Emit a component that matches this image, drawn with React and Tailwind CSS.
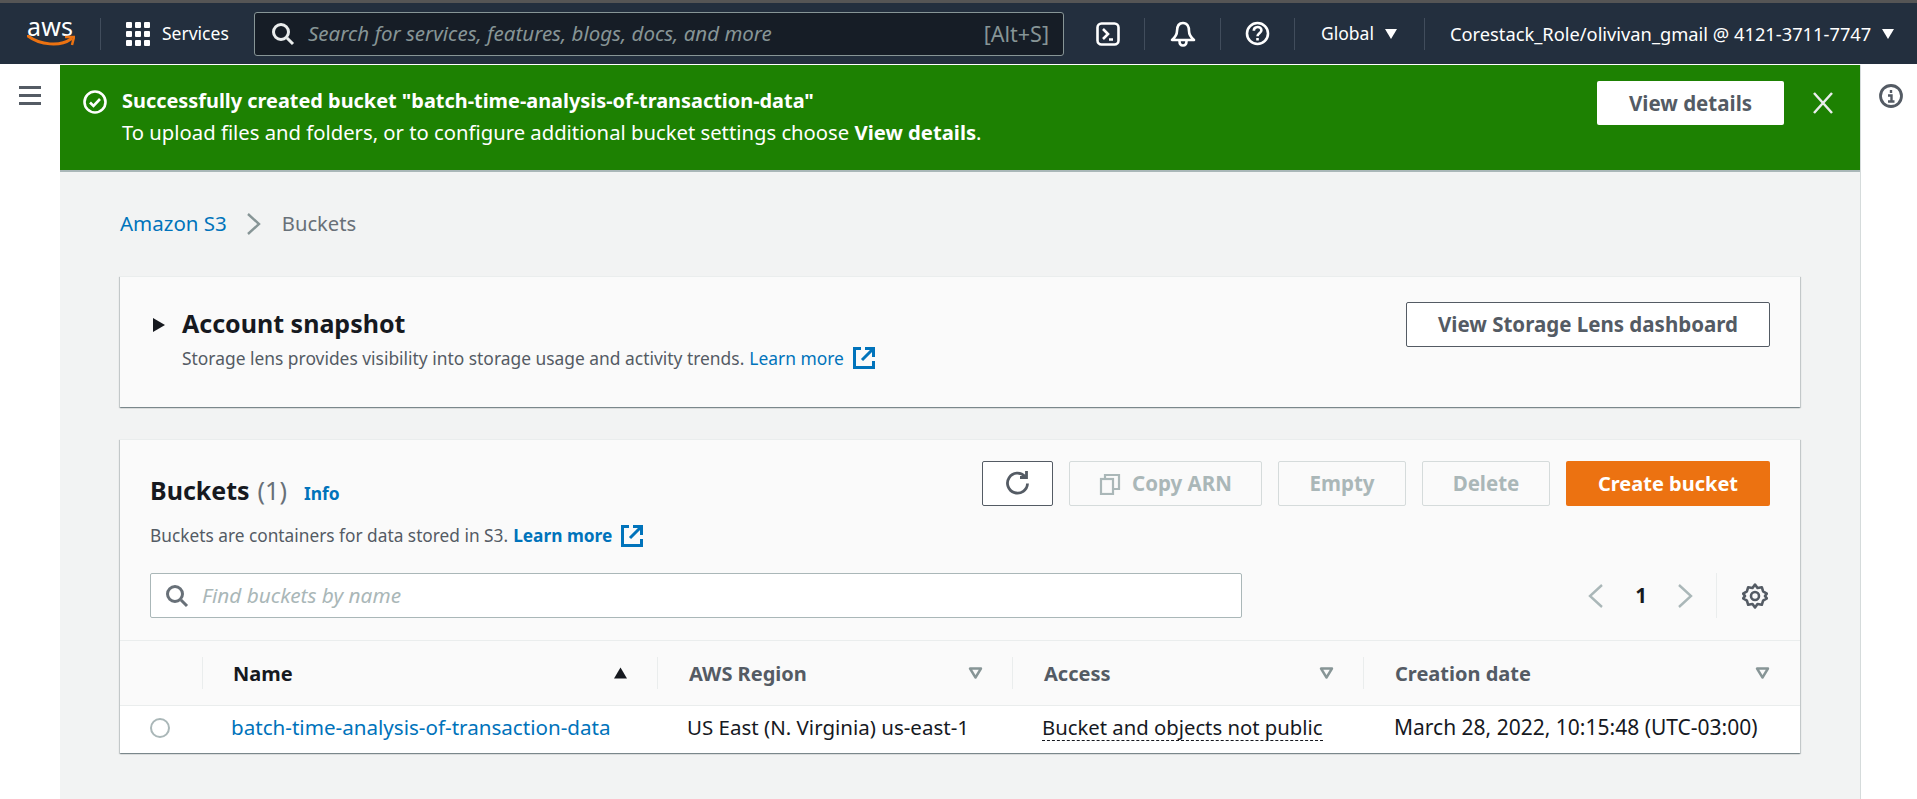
import React from "react";

const Caret = ({ filled }) => (
  <svg width="15" height="14" viewBox="0 0 15 14" className="shrink-0">
    {filled ? (
      <path d="M7.500 1.500 14 12.500H1Z" fill="#16191f" />
    ) : (
      <path d="M2 2.500h11L7.500 11.500Z" fill="none" stroke="#879596" strokeWidth="2.400" strokeLinejoin="round" />
    )}
  </svg>
);

const DownTri = () => (
  <svg width="12" height="10" viewBox="0 0 12 10" className="shrink-0"><path d="M0 0h12L6 10Z" fill="#fff" /></svg>
);

const External = () => (
  <svg width="24" height="24" viewBox="0 0 24 24" fill="none" stroke="#0073bb" strokeWidth="3" className="shrink-0">
    <path d="M9 2.500H2.500v19h19V15" />
    <path d="M13 2.500h8.500V11M21 3 10 14" />
  </svg>
);

const Sep = () => <div className="w-px h-[32px] bg-[#414d5c] shrink-0" />;

const HeadCell = ({ children, dark, filled, pl = "pl-[31px]" }) => (
  <div className={`flex items-center justify-between h-[32px] ${pl} pr-[29px] border-l border-[#eaeded]`}>
    <span className={`font-bold text-[20px] ${dark ? "text-[#16191f]" : "text-[#545b64]"}`}>{children}</span>
    <Caret filled={filled} />
  </div>
);

const DisabledBtn = ({ className = "", children }) => (
  <div className={`h-[45px] flex items-center justify-center gap-[11px] rounded-[2px] border border-[#d5dbdb] bg-[#fafafa] text-[#aab7b8] font-bold text-[20.500px] ${className}`}>
    {children}
  </div>
);

export default function App() {
  return (
    <div className="w-[1917px] h-[799px] overflow-hidden bg-white flex flex-col font-['Noto_Sans',sans-serif] text-[20.500px] leading-[25px] text-[#16191f]">
      {/* Top nav */}
      <header className="h-[64px] shrink-0 border-t-[3px] border-[#555555] bg-[#232f3e] flex items-center text-white relative">
        <div className="w-[100px] shrink-0 pl-[27px] flex flex-col">
          <span className="text-[25px] leading-[20px] -mt-[4px] tracking-[0.2px]">aws</span>
          <svg width="48" height="12" viewBox="0 0 48 12" className="-mt-[1px]" fill="none">
            <path d="M1 1c12 9 32 11 43 3" stroke="#ec7211" strokeWidth="3" strokeLinecap="round" />
            <path d="M38 2h9l-2 8" stroke="#ec7211" strokeWidth="2.500" fill="none" />
          </svg>
        </div>
        <Sep />
        <svg width="24" height="24" viewBox="0 0 24 24" className="ml-[25px] shrink-0" fill="#fff">
          {[0, 9, 18].map((x) => [0, 9, 18].map((y) => <rect key={`${x}-${y}`} x={x} y={y} width="6" height="6" rx="1" />))}
        </svg>
        <span className="ml-[12px] w-[92px] text-[17.500px] shrink-0">Services</span>
        <div className="w-[810px] h-[44px] shrink-0 rounded-[3px] border border-[#879596] bg-[#161d26] flex items-center pl-[16px] pr-[14px]">
          <svg width="24" height="24" viewBox="0 0 24 24" fill="none" stroke="#eaeded" strokeWidth="3" className="shrink-0">
            <circle cx="10" cy="10" r="7.500" />
            <path d="m16 16 6 6" />
          </svg>
          <span className="italic ml-[13px] text-[#879596] flex-1 whitespace-nowrap">Search for services, features, blogs, docs, and more</span>
          <span className="text-[#879596] text-[21.500px]">[Alt+S]</span>
        </div>
        <svg width="24" height="24" viewBox="0 0 24 24" fill="none" stroke="#fff" strokeWidth="2.600" className="ml-[32px] shrink-0">
          <rect x="1.500" y="1.500" width="21" height="21" rx="4" />
          <path d="m7 7 5 5-5 5M13 17.500h4" />
        </svg>
        <div className="ml-[24px]"><Sep /></div>
        <svg width="26" height="26" viewBox="0 0 26 26" fill="none" stroke="#fff" strokeWidth="2.600" className="ml-[25px] shrink-0">
          <path d="M13 2c-4.500 0-6 4-6 8 0 3-1.500 6-5 9h22c-3.500-3-5-6-5-9 0-4-1.500-8-6-8Z" strokeLinejoin="round" />
          <path d="M9.500 20c0 3 1.500 4.500 3.500 4.500s3.500-1.500 3.500-4.500" />
        </svg>
        <div className="ml-[24px]"><Sep /></div>
        <svg width="25" height="25" viewBox="0 0 25 25" fill="none" stroke="#fff" strokeWidth="2.600" className="ml-[24px] shrink-0">
          <circle cx="12.500" cy="12.500" r="10.500" />
          <path d="M8.800 9.800c0-5 7.600-5 7.600-.5 0 3-3.900 3-3.900 6" />
          <path d="M12.500 17v2.500" />
        </svg>
        <div className="ml-[24px]"><Sep /></div>
        <span className="ml-[26px] shrink-0 text-[17.500px]">Global</span>
        <div className="ml-[11px]"><DownTri /></div>
        <div className="ml-[27px]"><Sep /></div>
        <span className="ml-[25px] shrink-0 text-[18.300px] whitespace-nowrap">Corestack_Role/olivivan_gmail @ 4121-3711-7747</span>
        <div className="ml-[11px]"><DownTri /></div>
      </header>
      <div className="h-px shrink-0 bg-white" />

      <div className="flex flex-1 min-h-0">
        {/* Left rail */}
        <aside className="w-[60px] shrink-0 bg-white pl-[19px] pt-[21px]">
          <svg width="22" height="19" viewBox="0 0 22 19" fill="#545b64"><rect width="22" height="3" /><rect y="8" width="22" height="3" /><rect y="16" width="22" height="3" /></svg>
        </aside>

        {/* Main */}
        <main className="flex-1 min-w-0 flex flex-col bg-[#f2f3f3]">
          <div className="h-[107px] shrink-0 bg-[#1d8102] border-b-2 border-[#aab7b8] flex text-white pl-[23px] pr-[26px]">
            <svg width="24" height="24" viewBox="0 0 24 24" fill="none" stroke="#fff" strokeWidth="2.600" className="mt-[25px] shrink-0">
              <circle cx="12" cy="12" r="10.500" />
              <path d="m7 12.500 3.500 3.500L17 9" />
            </svg>
            <div className="ml-[15px] pt-[21px] flex-1 leading-[30px]">
              <div className="font-bold text-[19.900px]">Successfully created bucket "batch-time-analysis-of-transaction-data"</div>
              <div className="mt-[1px] text-[20.250px]">To upload files and folders, or to configure additional bucket settings choose <b>View details</b>.</div>
            </div>
            <div className="mt-[16px] w-[187px] h-[44px] bg-white rounded-[2px] text-[#545b64] font-bold flex items-center justify-center">View details</div>
            <svg width="22" height="22" viewBox="0 0 22 22" stroke="#eaeded" strokeWidth="2.500" className="mt-[27px] ml-[28px] shrink-0">
              <path d="m2 1 18 20M20 1 2 21" />
            </svg>
          </div>

          <div className="flex items-center pl-[60px] mt-[39px] h-[25px] text-[#687078]">
            <span className="text-[#0073bb]">Amazon S3</span>
            <svg width="16" height="24" viewBox="0 0 16 24" fill="none" stroke="#879596" strokeWidth="2.400" className="ml-[19px]"><path d="m2 2 11 10L2 22" /></svg>
            <span className="ml-[20px] text-[20.200px]">Buckets</span>
          </div>

          <div className="mx-[60px] mt-[40px] flex flex-col gap-[32px]">
            {/* Account snapshot */}
            <section className="h-[131px] shrink-0 bg-[#fafafa] shadow-[0_1px_1px_0_rgba(0,28,36,0.3),1px_1px_1px_0_rgba(0,28,36,0.15),-1px_1px_1px_0_rgba(0,28,36,0.15)] border-t border-[#eaeded] flex">
              <svg width="12" height="14" viewBox="0 0 12 14" className="ml-[33px] mt-[41px] shrink-0"><path d="M0 0 12 7 0 14Z" fill="#16191f" /></svg>
              <div className="ml-[17px] flex-1 pt-[30px]">
                <div className="font-bold text-[25px] leading-[32px]">Account snapshot</div>
                <div className="flex items-center mt-[7px] text-[17.400px] text-[#545b64] leading-[24px]">
                  <span>Storage lens provides visibility into storage usage and activity trends.</span>
                  <span className="ml-[5px] text-[#0073bb]">Learn more</span>
                  <span className="ml-[8px]"><External /></span>
                </div>
              </div>
              <div className="mt-[25px] mr-[30px] w-[364px] h-[45px] rounded-[2px] border border-[#545b64] bg-white text-[#545b64] font-bold flex items-center justify-center">View Storage Lens dashboard</div>
            </section>

            {/* Buckets */}
            <section className="h-[314px] shrink-0 bg-[#fafafa] shadow-[0_1px_1px_0_rgba(0,28,36,0.3),1px_1px_1px_0_rgba(0,28,36,0.15),-1px_1px_1px_0_rgba(0,28,36,0.15)] border-t border-[#eaeded] flex flex-col">
              <div className="flex pl-[30px] pr-[30px] pt-[21px]">
                <div className="flex-1">
                  <div className="flex items-baseline mt-[13px] leading-[32px]">
                    <span className="font-bold text-[25px]">Buckets</span>
                    <span className="text-[25px] text-[#687078] ml-[8px]">(1)</span>
                    <span className="font-bold text-[17.400px] text-[#0073bb] ml-[17px]">Info</span>
                  </div>
                  <div className="flex items-center mt-[15px] text-[17.300px] leading-[24px] text-[#545b64]">
                    <span>Buckets are containers for data stored in S3.</span>
                    <span className="ml-[5px] font-bold text-[#0073bb]">Learn more</span>
                    <span className="ml-[8px]"><External /></span>
                  </div>
                </div>
                <div className="flex gap-[16px] h-[45px]">
                  <div className="w-[71px] h-[45px] rounded-[2px] border border-[#545b64] bg-white flex items-center justify-center">
                    <svg width="25" height="25" viewBox="0 0 25 25" fill="none" stroke="#545b64" strokeWidth="2.800">
                      <path d="M20 5.500a10 10 0 1 0 2.500 7" />
                      <path d="M15 6.500h6.500V0" />
                    </svg>
                  </div>
                  <DisabledBtn className="w-[193px]">
                    <svg width="22" height="22" viewBox="0 0 22 22" fill="none" stroke="#aab7b8" strokeWidth="2.200">
                      <path d="M6 6V2h14v14h-6" />
                      <rect x="2" y="6" width="12" height="15" />
                    </svg>
                    <span>Copy ARN</span>
                  </DisabledBtn>
                  <DisabledBtn className="w-[128px]">Empty</DisabledBtn>
                  <DisabledBtn className="w-[128px]">Delete</DisabledBtn>
                  <div className="w-[204px] h-[45px] rounded-[2px] bg-[#ec7211] text-white font-bold text-[20px] flex items-center justify-center">Create bucket</div>
                </div>
              </div>

              <div className="flex items-center pl-[30px] pr-[30px] mt-[25px] h-[45px]">
                <div className="w-[1092px] h-[45px] rounded-[2px] border border-[#aab7b8] bg-white flex items-center pl-[14px]">
                  <svg width="24" height="24" viewBox="0 0 24 24" fill="none" stroke="#687078" strokeWidth="3" className="shrink-0">
                    <circle cx="10" cy="10" r="7.500" />
                    <path d="m16 16 6 6" />
                  </svg>
                  <span className="italic ml-[13px] text-[#aab7b8] text-[20.800px]">Find buckets by name</span>
                </div>
                <svg width="16" height="26" viewBox="0 0 16 26" fill="none" stroke="#aab7b8" strokeWidth="2.400" className="ml-[346px] shrink-0"><path d="M14 2 2 13l12 11" /></svg>
                <span className="ml-[31px] font-bold w-[12px] text-center">1</span>
                <svg width="16" height="26" viewBox="0 0 16 26" fill="none" stroke="#aab7b8" strokeWidth="2.400" className="ml-[30px] shrink-0"><path d="m2 2 12 11L2 24" /></svg>
                <div className="w-px h-[45px] bg-[#eaeded] ml-[23px] shrink-0" />
                <svg width="26" height="26" viewBox="0 0 26 26" fill="none" stroke="#545b64" strokeWidth="2.600" className="ml-[25px] shrink-0">
                  <path d="M13 1.500 15.500 5l4.300-.8 1.300 4.200 3.700 2.200L23 13l1.800 2.400-3.700 2.200-1.300 4.200-4.300-.8L13 24.500 10.500 21l-4.300.8-1.300-4.200-3.700-2.200L3 13l-1.800-2.400 3.700-2.200 1.300-4.200 4.300.8Z" strokeLinejoin="round" />
                  <circle cx="13" cy="13" r="4" />
                </svg>
              </div>

              <div className="mt-[22px] border-t border-[#eaeded] h-[65px] shrink-0 grid grid-cols-[82px_455px_355px_351px_436px] items-center">
                <div />
                <HeadCell dark filled pl="pl-[30px]">Name</HeadCell>
                <HeadCell>AWS Region</HeadCell>
                <HeadCell>Access</HeadCell>
                <HeadCell>Creation date</HeadCell>
              </div>

              <div className="flex-1 border-t border-[#eaeded] bg-white grid grid-cols-[82px_455px_355px_351px_436px] items-center pb-[4px]">
                <div className="pl-[30px]"><div className="w-[20px] h-[20px] rounded-full border-2 border-[#aab7b8] bg-white" /></div>
                <div className="pl-[29px] text-[#0073bb] whitespace-nowrap text-[20.600px]">batch-time-analysis-of-transaction-data</div>
                <div className="pl-[30px] whitespace-nowrap">US East (N. Virginia) us-east-1</div>
                <div className="pl-[30px]"><span className="border-b border-dashed border-[#16191f] inline-block leading-[25px] whitespace-nowrap text-[20.300px]">Bucket and objects not public</span></div>
                <div className="pl-[31px] whitespace-nowrap text-[21px]">March 28, 2022, 10:15:48 (UTC-03:00)</div>
              </div>
            </section>
          </div>
        </main>

        {/* Right rail */}
        <aside className="w-[57px] shrink-0 bg-white border-l border-[#d5dbdb] pl-[18px] pt-[19px]">
          <svg width="24" height="24" viewBox="0 0 24 24" fill="none" stroke="#545b64" strokeWidth="2.800">
            <circle cx="12" cy="12" r="10.500" />
            <path d="M12 6v3M9 11.500h3.500v6M9 17.500h6.500" strokeWidth="2.400" />
          </svg>
        </aside>
      </div>
    </div>
  );
}
